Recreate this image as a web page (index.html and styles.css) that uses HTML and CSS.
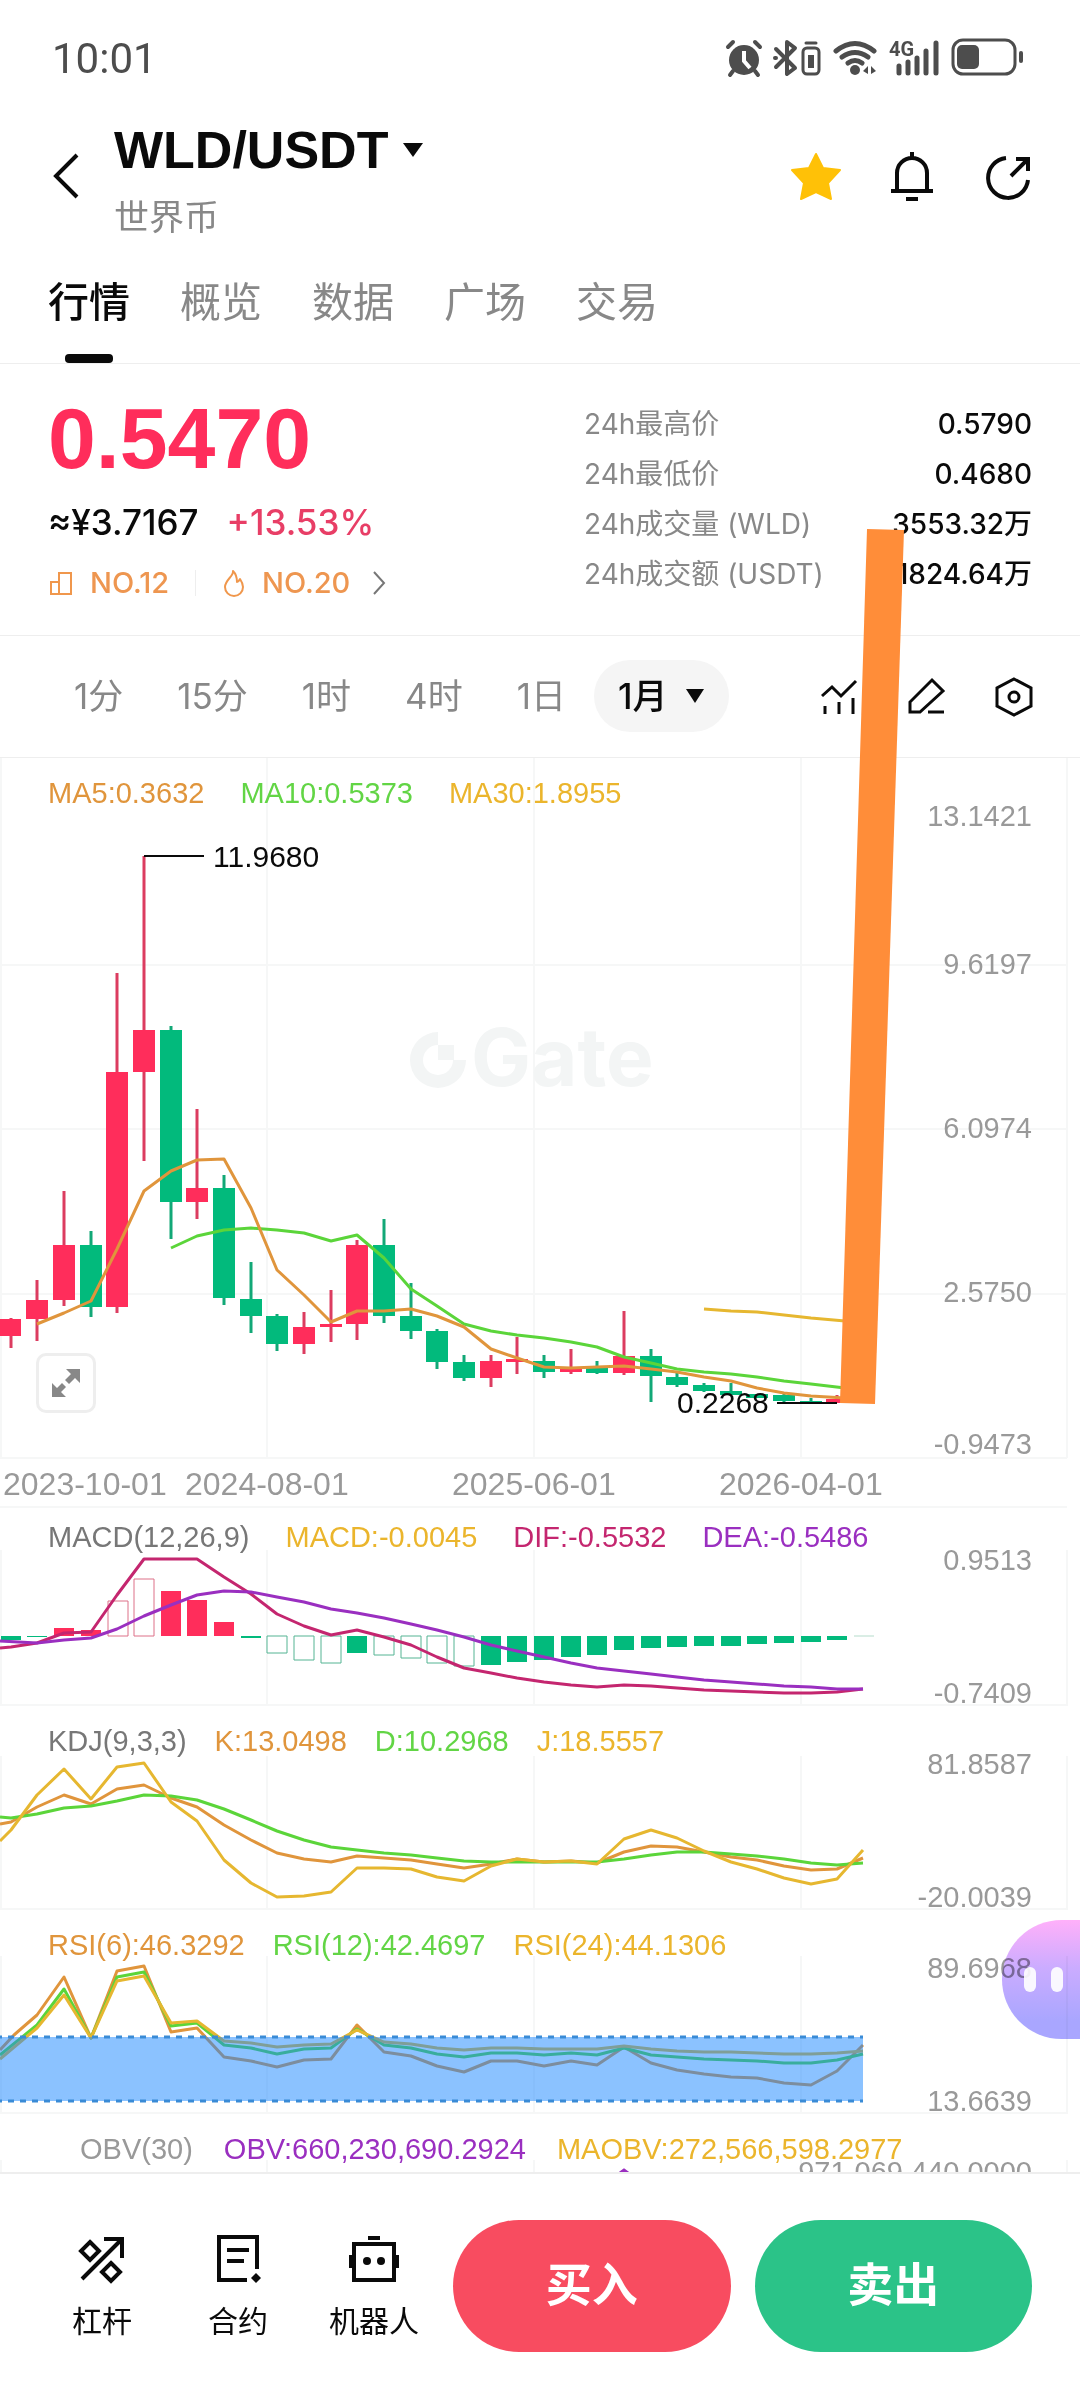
FILE: index.html
```html
<!DOCTYPE html>
<html lang="zh-CN">
<head>
<meta charset="utf-8">
<meta name="viewport" content="width=device-width, initial-scale=1">
<title>WLD/USDT</title>
<link rel="stylesheet" href="styles.css">
</head>
<body>
<div class="app">
  <div class="status">
    <span class="clock">10:01</span>
    <svg class="status-icons" width="302" height="44" viewBox="0 0 302 44" aria-hidden="true">
      <g fill="#4d4d4d" stroke="#4d4d4d" stroke-linecap="round">
        <circle cx="20" cy="24" r="15" stroke="none"/>
        <path d="M4 11l5-5M31 6l5 5M9 35l-3 4M31 35l3 4" stroke-width="4" fill="none"/>
        <path d="M20 15v10l6 7" stroke="#fff" stroke-width="4" fill="none" stroke-linecap="butt"/>
        <path d="M52 13l19 19-8 6V6l8 6-19 19M51 22h1" fill="none" stroke-width="4" stroke-linejoin="round"/>
        <rect x="79" y="12" width="16" height="26" rx="4" fill="none" stroke-width="3"/>
        <rect x="84" y="19" width="6" height="13" stroke="none"/>
        <path d="M82 7h10" stroke-width="3"/>
        <path d="M112 15q19-15 38 0M118 21q13-9 26 0M124 27q7-5 14 0" fill="none" stroke-width="5"/>
        <circle cx="131" cy="34" r="5" stroke="none"/>
        <path d="M139 35l5-5v8zM152 35l-5-5v8z" stroke="none"/>
        <path d="M175 30v7M184 26v11M193 22v15M202 15v22M212 7v30" stroke-width="5"/>
        <rect x="229" y="4" width="62" height="34" rx="10" fill="none" stroke-width="3"/>
        <rect x="233" y="9" width="22" height="24" rx="5" stroke="none"/>
        <path d="M297 17v8" stroke-width="4"/>
      </g>
      <text class="net" x="165" y="20">4G</text>
    </svg>
  </div>

  <header class="header">
    <button class="icon-btn" aria-label="返回">
      <svg width="28" height="48" viewBox="0 0 28 48"><path d="M25 3L4 24l21 21" fill="none" stroke="#0a0a0a" stroke-width="4"/></svg>
    </button>
    <div class="pair">
      <button class="pair-name">WLD/USDT
        <svg width="22" height="16" viewBox="0 0 22 16"><path d="M1 1h20L11 15z" fill="#0a0a0a"/></svg>
      </button>
      <div class="pair-sub">世界币</div>
    </div>
    <div class="actions">
      <button class="icon-btn" aria-label="收藏">
        <svg width="52" height="52" viewBox="0 0 52 52"><path d="M26 4l7 14 17 2-12 13 3 16-15-7-15 7 3-16L2 20l17-2z" fill="#ffc107" stroke="#ffc107" stroke-width="2" stroke-linejoin="round"/></svg>
      </button>
      <button class="icon-btn" aria-label="提醒">
        <svg width="52" height="52" viewBox="0 0 52 52"><path d="M11 41V23a15 15 0 0 1 30 0v18M5 41h42M26 2v6M20 49h12" fill="none" stroke="#0a0a0a" stroke-width="4"/></svg>
      </button>
      <button class="icon-btn" aria-label="分享">
        <svg width="52" height="52" viewBox="0 0 52 52"><path d="M24 8a20 20 0 1 0 22 22M34 9h12v12M45 10L29 26" fill="none" stroke="#0a0a0a" stroke-width="4"/></svg>
      </button>
    </div>
  </header>

  <nav class="tabs">
    <a class="tab active" href="#market">行情</a>
    <a class="tab" href="#overview">概览</a>
    <a class="tab" href="#data">数据</a>
    <a class="tab" href="#square">广场</a>
    <a class="tab" href="#trade">交易</a>
  </nav>

  <section class="ticker">
    <div class="quote">
      <div class="last">0.5470</div>
      <div class="fiat"><span>≈¥3.7167</span><span class="change">+13.53%</span></div>
      <a class="ranks" href="#rank">
        <svg width="26" height="26" viewBox="0 0 26 26"><path d="M3 12h8v12H3zM11 3h12v21H11z" fill="none" stroke="#f0974c" stroke-width="2"/></svg>
        <span>NO.12</span>
        <i class="split"></i>
        <svg width="24" height="30" viewBox="0 0 24 30"><path d="M11 3c1 5-8 9-8 16a9 9 0 0 0 18 0c0-3-1-5-3-8-1 2-2 3-3 3 0-4-1-8-4-11z" fill="none" stroke="#f0974c" stroke-width="2" stroke-linejoin="round"/></svg>
        <span>NO.20</span>
        <svg class="more" width="14" height="26" viewBox="0 0 14 26"><path d="M2 2l10 11L2 24" fill="none" stroke="#777" stroke-width="2"/></svg>
      </a>
    </div>
    <table class="stats">
      <tr><th scope="row">24h最高价</th><td>0.5790</td></tr>
      <tr><th scope="row">24h最低价</th><td>0.4680</td></tr>
      <tr><th scope="row">24h成交量 (WLD)</th><td>3553.32万</td></tr>
      <tr><th scope="row">24h成交额 (USDT)</th><td>1824.64万</td></tr>
    </table>
  </section>

  <div class="periods">
    <button class="period">1分</button>
    <button class="period">15分</button>
    <button class="period">1时</button>
    <button class="period">4时</button>
    <button class="period">1日</button>
    <button class="period selected">1月
      <svg width="20" height="14" viewBox="0 0 20 14"><path d="M1 0h18l-9 14z" fill="#0a0a0a"/></svg>
    </button>
    <div class="tools">
      <button class="icon-btn" aria-label="指标">
        <svg width="40" height="44" viewBox="0 0 40 44"><path d="M2 22l10-9 9 9L36 7M5 32v8M19 28v12M33 24v16" fill="none" stroke="#0a0a0a" stroke-width="3"/></svg>
      </button>
      <button class="icon-btn" aria-label="画线">
        <svg width="40" height="44" viewBox="0 0 40 44"><path d="M3 38V28L25 6l11 11-23 21zM21 38h16" fill="none" stroke="#0a0a0a" stroke-width="3"/></svg>
      </button>
      <button class="icon-btn" aria-label="设置">
        <svg width="40" height="44" viewBox="0 0 40 44"><path d="M20 5l17 9v18l-17 9-17-9V14z" fill="none" stroke="#0a0a0a" stroke-width="3"/><circle cx="20" cy="23" r="5" fill="none" stroke="#0a0a0a" stroke-width="3"/></svg>
      </button>
    </div>
  </div>

  <section class="panel">
    <div class="legend legend-wide"><span class="c-orange">MA5:0.3632</span><span class="c-green">MA10:0.5373</span><span class="c-yellow">MA30:1.8955</span></div>
    <svg class="plot" viewBox="0 758 1080 750">
      <path class="grid" d="M0 965h1067M0 1129h1067M0 1294h1067M0 1458h1067M0 1507h1067M1 758v700M267 758v700M534 758v700M801 758v700M1067 758v700"/>
      <g fill="#f3f5f5">
        <path d="M438 1032a28 28 0 1 0 28 28h-13a15 15 0 1 1-15-15z"/>
        <path d="M438 1045h16v15h-16z"/>
        <text class="mark" x="471" y="1086">Gate</text>
      </g>
      <path class="wick up" d="M11 1318V1348M37 1280V1341M64 1191V1306M117 973V1313M144 856V1161M197 1109V1219M304 1312V1354M331 1290V1342M357 1240V1340M491 1355V1387M517 1337V1374M571 1349V1374M624 1311V1375M837 1395V1403"/>
      <path class="wick down" d="M91 1231V1317M171 1026V1239M224 1175V1305M251 1262V1333M277 1314V1351M384 1219V1323M411 1283V1339M437 1329V1369M464 1355V1381M544 1355V1378M597 1361V1374M651 1349V1402M677 1373V1387M704 1383V1392M731 1383V1395M784 1393V1403M811 1398V1404"/>
      <path class="fill-up" d="M0 1319h21v17H0zM26 1300h22v19H26zM53 1245h22v55H53zM106 1072h22v235h-22zM133 1030h22v42h-22zM186 1188h22v14h-22zM293 1327h22v17h-22zM320 1324h22v3h-22zM346 1245h22v79h-22zM480 1361h22v17h-22zM506 1359h22v3h-22zM560 1368h22v4h-22zM613 1356h22v17h-22zM826 1399h22v4h-22z"/>
      <path class="fill-down" d="M80 1245h22v62H80zM160 1030h22v172h-22zM213 1188h22v110h-22zM240 1299h22v17h-22zM266 1316h22v28h-22zM373 1245h22v71h-22zM400 1316h22v15h-22zM426 1331h22v31h-22zM453 1362h22v16h-22zM533 1361h22v11h-22zM586 1368h22v5h-22zM640 1356h22v20h-22zM666 1377h22v8h-22zM693 1385h22v6h-22zM720 1391h22v4h-22zM746 1394h22v4h-22zM773 1395h22v6h-22zM800 1401h22v2h-22z"/>
      <polyline class="line s-yellow" points="704,1309 731,1311 757,1312 784,1315 811,1318 845,1321"/>
      <polyline class="line s-green" points="171,1248 197,1236 224,1230 251,1228 277,1230 304,1233 331,1241 357,1235 384,1258 411,1289 437,1306 464,1324 491,1331 517,1335 544,1338 571,1342 597,1347 624,1357 651,1363 677,1369 704,1372 731,1374 757,1377 784,1381 811,1384 845,1388"/>
      <polyline class="line s-orange" points="37,1324 64,1313 91,1301 117,1249 144,1191 171,1171 197,1160 224,1159 251,1208 277,1270 304,1295 331,1322 357,1311 384,1311 411,1309 437,1316 464,1327 491,1349 517,1358 544,1367 571,1368 597,1367 624,1366 651,1369 677,1372 704,1377 731,1381 757,1388 784,1393 811,1396 845,1398"/>
      <path d="M144 856h60M777 1403h60" stroke="#0a0a0a" stroke-width="2"/>
      <text class="peak" x="213" y="867">11.9680</text>
      <text class="peak" x="677" y="1413">0.2268</text>
      <g class="axis">
        <text x="1032" y="826">13.1421</text><text x="1032" y="974">9.6197</text><text x="1032" y="1138">6.0974</text><text x="1032" y="1302">2.5750</text><text x="1032" y="1454">-0.9473</text>
      </g>
      <g class="dates">
        <text x="3" y="1495">2023-10-01</text><text x="185" y="1495">2024-08-01</text><text x="452" y="1495">2025-06-01</text><text x="719" y="1495">2026-04-01</text>
      </g>
    </svg>
    <button class="expand" aria-label="全屏">
      <svg width="30" height="30" viewBox="0 0 30 30"><path d="M15 1h14v14l-5-5-6 6-4-4 6-6zM1 15l5 5 5-5 4 4-5 5 5 5H1z" fill="#888"/></svg>
    </button>
  </section>

  <section class="panel">
    <div class="legend legend-wide legend-macd"><span>MACD(12,26,9)</span><span class="c-yellow">MACD:-0.0045</span><span class="c-magenta">DIF:-0.5532</span><span class="c-purple">DEA:-0.5486</span></div>
    <svg class="plot" viewBox="0 1508 1080 198">
      <path class="grid" d="M0 1705h1067M1 1550v156M267 1550v156M534 1550v156M801 1550v156M1067 1550v156"/>
      <path class="fill-up" d="M54 1628h20v8H54zM81 1630h20v6H81zM161 1591h20v45h-20zM187 1600h20v36h-20zM214 1622h20v14h-20z"/>
      <path class="fill-down" d="M1 1636h20v4H1zM27 1636h20v1H27zM241 1636h20v2h-20zM347 1636h20v17h-20zM481 1636h20v29h-20zM507 1636h20v26h-20zM534 1636h20v24h-20zM561 1636h20v21h-20zM587 1636h20v19h-20zM614 1636h20v14h-20zM641 1636h20v12h-20zM667 1636h20v11h-20zM694 1636h20v10h-20zM721 1636h20v10h-20zM747 1636h20v8h-20zM774 1636h20v7h-20zM801 1636h20v6h-20zM827 1636h20v4h-20z"/>
      <path class="hollow" stroke="#dd7088" d="M108 1601h20v35h-20zM134 1579h20v57h-20z"/>
      <path class="hollow" stroke="#55b493" d="M267 1636h20v17h-20zM294 1636h20v24h-20zM321 1636h20v27h-20zM374 1636h20v19h-20zM401 1636h20v22h-20zM427 1636h20v27h-20zM454 1636h20v30h-20z"/>
      <path stroke="#b5dccb" stroke-width="1" d="M854 1636h20"/>
      <polyline class="line s-magenta" points="0,1648 11,1647 37,1643 64,1633 91,1632 117,1595 144,1559 171,1559 197,1559 224,1577 251,1594 277,1614 304,1626 331,1635 357,1630 384,1637 411,1645 437,1657 464,1668 491,1673 517,1678 544,1682 571,1685 597,1687 624,1685 651,1686 677,1688 704,1690 731,1691 757,1692 784,1693 811,1693 837,1692 863,1689"/>
      <polyline class="line s-purple" points="0,1641 37,1643 64,1640 91,1638 117,1629 144,1616 171,1605 197,1595 224,1591 251,1592 277,1597 304,1602 331,1609 357,1613 384,1618 411,1624 437,1630 464,1637 491,1645 517,1651 544,1657 571,1663 597,1668 624,1671 651,1674 677,1677 704,1680 731,1682 757,1684 784,1686 811,1687 837,1689 863,1689"/>
      <g class="axis"><text x="1032" y="1570">0.9513</text><text x="1032" y="1703">-0.7409</text></g>
    </svg>
  </section>

  <section class="panel">
    <div class="legend"><span>KDJ(9,3,3)</span><span class="c-orange">K:13.0498</span><span class="c-green">D:10.2968</span><span class="c-yellow">J:18.5557</span></div>
    <svg class="plot" viewBox="0 1706 1080 204">
      <path class="grid" d="M0 1909h1067M1 1756v154M267 1756v154M534 1756v154M801 1756v154M1067 1756v154"/>
      <polyline class="line s-orange" points="0,1824 11,1822 37,1807 64,1795 91,1804 117,1789 144,1785 171,1798 197,1807 224,1825 251,1840 277,1853 304,1859 331,1862 357,1856 384,1858 411,1860 437,1864 464,1868 491,1864 517,1859 544,1862 571,1861 597,1863 624,1852 651,1846 677,1847 704,1852 731,1857 757,1860 784,1866 811,1870 837,1869 863,1858"/>
      <polyline class="line s-green" points="0,1817 11,1818 37,1814 64,1808 91,1806 117,1801 144,1795 171,1796 197,1800 224,1809 251,1820 277,1831 304,1840 331,1847 357,1850 384,1853 411,1855 437,1858 464,1861 491,1862 544,1862 597,1862 624,1859 651,1855 677,1852 704,1852 731,1854 757,1856 784,1859 811,1863 837,1865 863,1863"/>
      <polyline class="line s-yellow" points="0,1841 11,1830 37,1795 64,1769 91,1799 117,1767 144,1763 171,1802 197,1821 224,1860 251,1883 277,1897 304,1896 331,1892 357,1868 384,1868 411,1869 437,1877 464,1881 491,1866 517,1859 544,1862 571,1861 597,1864 624,1839 651,1830 677,1838 704,1851 731,1862 757,1869 784,1878 811,1884 837,1879 863,1850"/>
      <g class="axis"><text x="1032" y="1774">81.8587</text><text x="1032" y="1907">-20.0039</text></g>
    </svg>
  </section>

  <section class="panel">
    <div class="legend"><span class="c-orange">RSI(6):46.3292</span><span class="c-green">RSI(12):42.4697</span><span class="c-yellow">RSI(24):44.1306</span></div>
    <svg class="plot" viewBox="0 1910 1080 204">
      <path class="grid" d="M0 2113h1067M1 1956v158M267 1956v158M534 1956v158M801 1956v158M1067 1956v158"/>
      <polyline class="line s-orange" points="0,2050 14,2035 37,2015 64,1977 91,2038 117,1971 144,1966 171,2032 197,2028 224,2057 251,2061 277,2067 304,2060 331,2059 357,2025 384,2052 411,2056 437,2066 464,2072 491,2061 517,2061 544,2066 571,2061 597,2065 624,2047 651,2063 677,2070 704,2074 731,2077 757,2078 784,2083 811,2085 837,2071 863,2045"/>
      <polyline class="line s-green" points="0,2055 37,2025 64,1989 91,2038 117,1977 144,1972 171,2026 197,2023 224,2045 251,2048 277,2054 304,2049 331,2048 357,2029 384,2045 411,2048 437,2054 464,2057 491,2053 517,2053 544,2055 571,2053 597,2055 624,2048 651,2055 677,2057 704,2059 731,2060 757,2061 784,2063 811,2063 837,2060 863,2054"/>
      <polyline class="line s-yellow" points="0,2059 37,2028 64,1995 91,2038 117,1981 144,1976 171,2023 197,2021 224,2041 251,2043 277,2047 304,2045 331,2044 357,2030 384,2042 411,2044 437,2048 464,2050 491,2048 517,2048 544,2049 571,2049 597,2049 624,2046 651,2049 677,2051 704,2052 731,2052 757,2053 784,2054 811,2054 837,2053 863,2051"/>
      <path fill="#1885ff" fill-opacity=".5" d="M0 2037h863v64H0z"/>
      <path stroke="#3a8bd6" stroke-width="3" stroke-dasharray="6 6" d="M-4 2037h867M-4 2101h867"/>
      <g class="axis"><text x="1032" y="1978">89.6968</text><text x="1032" y="2111">13.6639</text></g>
    </svg>
  </section>

  <section class="panel panel-cut">
    <div class="legend legend-obv"><span class="c-gray">OBV(30)</span><span class="c-purple">OBV:660,230,690.2924</span><span class="c-yellow">MAOBV:272,566,598.2977</span></div>
    <svg class="plot" viewBox="0 2114 1080 58">
      <path class="grid" d="M1 2160v12M267 2160v12M534 2160v12M801 2160v12M1067 2160v12"/>
      <path class="s-purple" fill="none" stroke-width="3" d="M620 2173l4-3 4 3"/>
      <g class="axis"><text x="1032" y="2182">971,069,440.0000</text></g>
    </svg>
  </section>

  <footer class="footer">
    <nav class="shortcuts">
      <a class="shortcut" href="#margin">
        <svg width="50" height="50" viewBox="0 0 50 50"><path d="M5 45L44 6M27 5h18v19M13 8l9 9-9 9-9-9zM34 29l9 9-9 9-9-9z" fill="none" stroke="#0a0a0a" stroke-width="4"/></svg>
        <span>杠杆</span>
      </a>
      <a class="shortcut" href="#futures">
        <svg width="50" height="50" viewBox="0 0 50 50"><path d="M34 46H6V3h38v32M14 16h22M14 27h17" fill="none" stroke="#0a0a0a" stroke-width="4"/><path d="M43 39l5 5-5 5-5-5z" fill="#0a0a0a"/></svg>
        <span>合约</span>
      </a>
      <a class="shortcut" href="#bot">
        <svg width="52" height="50" viewBox="0 0 52 50"><path d="M6 10h40v36H6zM20 4h12" fill="none" stroke="#0a0a0a" stroke-width="4"/><path d="M1 21h5v13H1zM46 21h5v13h-5z" fill="#0a0a0a"/><circle cx="19" cy="27" r="4" fill="#0a0a0a"/><circle cx="33" cy="27" r="4" fill="#0a0a0a"/></svg>
        <span>机器人</span>
      </a>
    </nav>
    <button class="trade buy">买入</button>
    <button class="trade sell">卖出</button>
  </footer>

  <svg class="marker" viewBox="0 0 1080 2400" aria-hidden="true"><path d="M867 529l37 1-29 874-35-1z" fill="#ff8d39"/></svg>
  <button class="assistant" aria-label="助手"><i></i><i></i></button>
</div>
</body>
</html>
```
FILE: styles.css
```css
* { box-sizing: border-box; }

body {
  margin: 0;
  background: #fff;
  color: #0a0a0a;
  font-family: Inter, "Noto Sans CJK SC", sans-serif;
}

button {
  margin: 0;
  padding: 0;
  border: 0;
  background: none;
  color: inherit;
  font: inherit;
  cursor: pointer;
}

a { color: inherit; text-decoration: none; }
svg { display: block; flex: none; }

.app { position: relative; overflow: hidden; }

.status {
  display: flex;
  align-items: center;
  justify-content: space-between;
  height: 116px;
  padding: 0 54px 0 52px;
  color: #4d4d4d;
}
.clock { font: 42px Roboto, sans-serif; }
.net { font: 700 20px Roboto, sans-serif; fill: #4d4d4d; }

.header {
  display: flex;
  align-items: flex-start;
  padding: 0 46px 0 52px;
}
.icon-btn { display: flex; align-items: center; }
.header .icon-btn { height: 120px; }
.pair { flex: 1; padding-left: 34px; }
.pair-name {
  display: flex;
  align-items: center;
  gap: 14px;
  font: 700 52px/68px "Liberation Sans", sans-serif;
}
.pair-sub { font-size: 35px; line-height: 66px; color: #888; }
.actions { display: flex; gap: 44px; }

.tabs {
  display: flex;
  gap: 50px;
  padding: 0 48px;
  border-bottom: 1px solid #eee;
  font-size: 41px;
  line-height: 104px;
  color: #888;
}
.tab::after { content: ""; display: block; height: 9px; }
.tab.active { color: #0a0a0a; font-weight: 500; }
.tab.active::after {
  width: 48px;
  margin: 0 auto;
  border-radius: 4px;
  background: #0a0a0a;
}

.ticker {
  display: flex;
  align-items: center;
  justify-content: space-between;
  padding: 30px 48px 31px;
  border-bottom: 1px solid #eee;
}
.last {
  font: 700 86px/88px "Liberation Sans", sans-serif;
  color: #ff2d5b;
}
.fiat {
  display: flex;
  gap: 28px;
  font-size: 35px;
  font-weight: 500;
  line-height: 80px;
}
.change { color: #e83e66; }
.ranks {
  display: flex;
  align-items: center;
  gap: 16px;
  font-size: 29px;
  font-weight: 500;
  line-height: 42px;
  color: #ee9650;
}
.split { width: 1px; height: 26px; margin: 0 10px; background: #eee; }
.more { margin-left: 6px; }

.stats { width: 448px; border-collapse: collapse; font-size: 28px; line-height: 50px; }
.stats th { padding: 0; text-align: left; font-weight: 400; color: #888; white-space: nowrap; }
.stats td { padding: 0; text-align: right; font-weight: 500; white-space: nowrap; }

.periods {
  display: flex;
  align-items: center;
  gap: 54px;
  padding: 24px 46px 25px 74px;
  border-bottom: 1px solid #eee;
  font-size: 35px;
  line-height: 72px;
  color: #888;
}
.period.selected {
  display: flex;
  align-items: center;
  gap: 18px;
  margin-left: -26px;
  padding: 0 24px;
  border-radius: 36px;
  background: #f5f5f5;
  color: #0a0a0a;
  font-weight: 500;
}
.tools { display: flex; gap: 47px; margin-left: auto; }

.panel { position: relative; font-family: "Liberation Sans", sans-serif; }
.plot { width: 100%; height: auto; overflow: visible; }
.panel-cut { overflow: hidden; }
.legend {
  position: absolute;
  top: 18px;
  left: 48px;
  display: flex;
  gap: 28px;
  font-size: 29px;
  line-height: 34px;
  color: #777;
  white-space: nowrap;
}
.legend-wide { gap: 36px; }
.legend-macd { top: 12px; }
.legend-obv { left: 80px; gap: 31px; }
.c-orange { color: #e0953c; }
.c-green { color: #62d545; }
.c-yellow { color: #ebb52c; }
.c-magenta { color: #c4266f; }
.c-purple { color: #9a2fc0; }
.c-gray { color: #999; }

.grid { fill: none; stroke: #f6f7f7; stroke-width: 2; }
.line { fill: none; stroke-width: 3; stroke-linejoin: round; }
.s-orange { stroke: #e0953c; }
.s-green { stroke: #5bd53a; }
.s-yellow { stroke: #e6b730; }
.s-magenta { stroke: #c4266f; }
.s-purple { stroke: #9a2fc0; }
.wick { fill: none; stroke-width: 3; }
.wick.up { stroke: #dc3c60; }
.wick.down { stroke: #12a877; }
.fill-up { fill: #ff2d5b; }
.fill-down { fill: #02ba7c; }
.hollow { fill: #fff; stroke-width: 1; }
.axis text { font-size: 29px; fill: #999; text-anchor: end; }
.dates text { font-size: 32px; fill: #999; }
.peak { font-size: 30px; fill: #0a0a0a; }
.mark { font: 700 80px Inter, sans-serif; }

.expand {
  position: absolute;
  left: 36px;
  bottom: 95px;
  display: flex;
  align-items: center;
  justify-content: center;
  width: 60px;
  height: 60px;
  border: 3px solid #eee;
  border-radius: 10px;
  background: #fff;
}

.footer {
  display: flex;
  align-items: center;
  gap: 24px;
  padding: 46px 48px 48px 34px;
  border-top: 2px solid #eee;
}
.shortcuts { display: flex; margin-right: -13px; padding-top: 4px; }
.shortcut {
  display: flex;
  flex-direction: column;
  align-items: center;
  gap: 16px;
  width: 136px;
  font-size: 30px;
  line-height: 42px;
}
.trade {
  flex: 1;
  height: 132px;
  padding-bottom: 10px;
  border-radius: 66px;
  color: #fff;
  font-size: 46px;
  font-weight: 700;
}
.buy { background: #f84c60; }
.sell { background: #2bc388; }

.marker {
  position: absolute;
  top: 0;
  left: 0;
  width: 100%;
  height: auto;
  pointer-events: none;
}
.assistant {
  position: absolute;
  top: 1920px;
  right: 0;
  display: flex;
  align-items: center;
  gap: 15px;
  width: 78px;
  height: 119px;
  padding-left: 22px;
}
/* Tinted glass: the chart labels stay readable through the bubble. */
.assistant::before {
  content: "";
  position: absolute;
  inset: 0;
  border-radius: 60px 0 0 60px;
  background: linear-gradient(#ffb0fa, #cbacff 40%, #a9a6ff 85%);
  mix-blend-mode: multiply;
}
.assistant i {
  position: relative;
  width: 12px;
  height: 25px;
  border-radius: 6px;
  background: #fff;
  opacity: .9;
}
```
